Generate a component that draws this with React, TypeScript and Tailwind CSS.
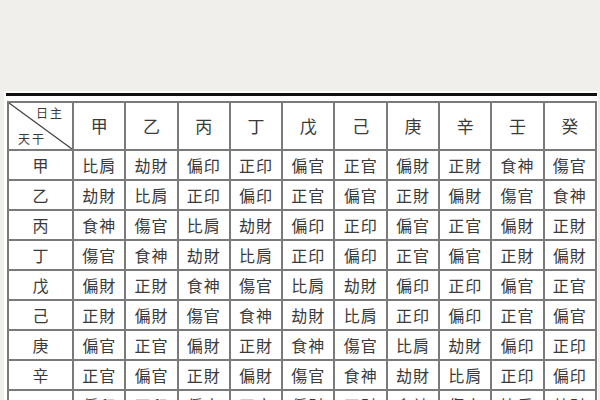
const stems = ['甲', '乙', '丙', '丁', '戊', '己', '庚', '辛', '壬', '癸'];

const rows: string[][] = [
  ['比肩', '劫財', '偏印', '正印', '偏官', '正官', '偏財', '正財', '食神', '傷官'],
  ['劫財', '比肩', '正印', '偏印', '正官', '偏官', '正財', '偏財', '傷官', '食神'],
  ['食神', '傷官', '比肩', '劫財', '偏印', '正印', '偏官', '正官', '偏財', '正財'],
  ['傷官', '食神', '劫財', '比肩', '正印', '偏印', '正官', '偏官', '正財', '偏財'],
  ['偏財', '正財', '食神', '傷官', '比肩', '劫財', '偏印', '正印', '偏官', '正官'],
  ['正財', '偏財', '傷官', '食神', '劫財', '比肩', '正印', '偏印', '正官', '偏官'],
  ['偏官', '正官', '偏財', '正財', '食神', '傷官', '比肩', '劫財', '偏印', '正印'],
  ['正官', '偏官', '正財', '偏財', '傷官', '食神', '劫財', '比肩', '正印', '偏印'],
  ['偏印', '正印', '偏官', '正官', '偏財', '正財', '食神', '傷官', '比肩', '劫財'],
  ['傷官', '食神', '劫財', '比肩', '正印', '偏印', '正官', '偏官', '正財', '偏財'],
];

export default function App() {
  return (
    <div
      className="w-[600px] h-[400px] overflow-hidden bg-[#f0efeb] pt-[91px] pl-[4px] pr-[2px]"
      style={{ fontFamily: '"Noto Sans CJK TC", "Noto Sans CJK SC", sans-serif' }}
    >
      <div className="bg-white h-[400px] pt-[2px]">
        {/* thick rule above the table */}
        <div className="h-[3px] bg-[#111] ml-[2px] mr-[1px]" />

        <div className="mt-[5px] ml-[3px] mr-[1px] grid grid-cols-[63px_repeat(10,1fr)] gap-[2px] bg-[#7a7a7a] p-[2px] text-[#3a3a3a]">
          {/* corner cell */}
          <div className="relative h-[46px] bg-white">
            <svg className="absolute inset-0 w-full h-full" viewBox="0 0 63 46" preserveAspectRatio="none">
              <line x1="0" y1="0" x2="63" y2="46" stroke="#444" strokeWidth="1.3" />
            </svg>
            <span className="absolute right-[8px] top-[4px] text-[12px] leading-none tracking-[2px]">日主</span>
            <span className="absolute left-[9px] bottom-[4px] text-[12px] leading-none tracking-[2px]">天干</span>
          </div>
          {stems.map((s) => (
            <div key={s} className="h-[46px] bg-white flex items-center justify-center text-[17px]">
              {s}
            </div>
          ))}

          {rows.map((row, i) => (
            <div key={i} className="contents">
              <div className="h-[28px] bg-white flex items-center justify-center text-[16px]">{stems[i]}</div>
              {row.map((c, j) => (
                <div key={j} className="h-[28px] bg-white flex items-center justify-center text-[16px] tracking-[1px]">
                  {c}
                </div>
              ))}
            </div>
          ))}
        </div>
      </div>
    </div>
  );
}
